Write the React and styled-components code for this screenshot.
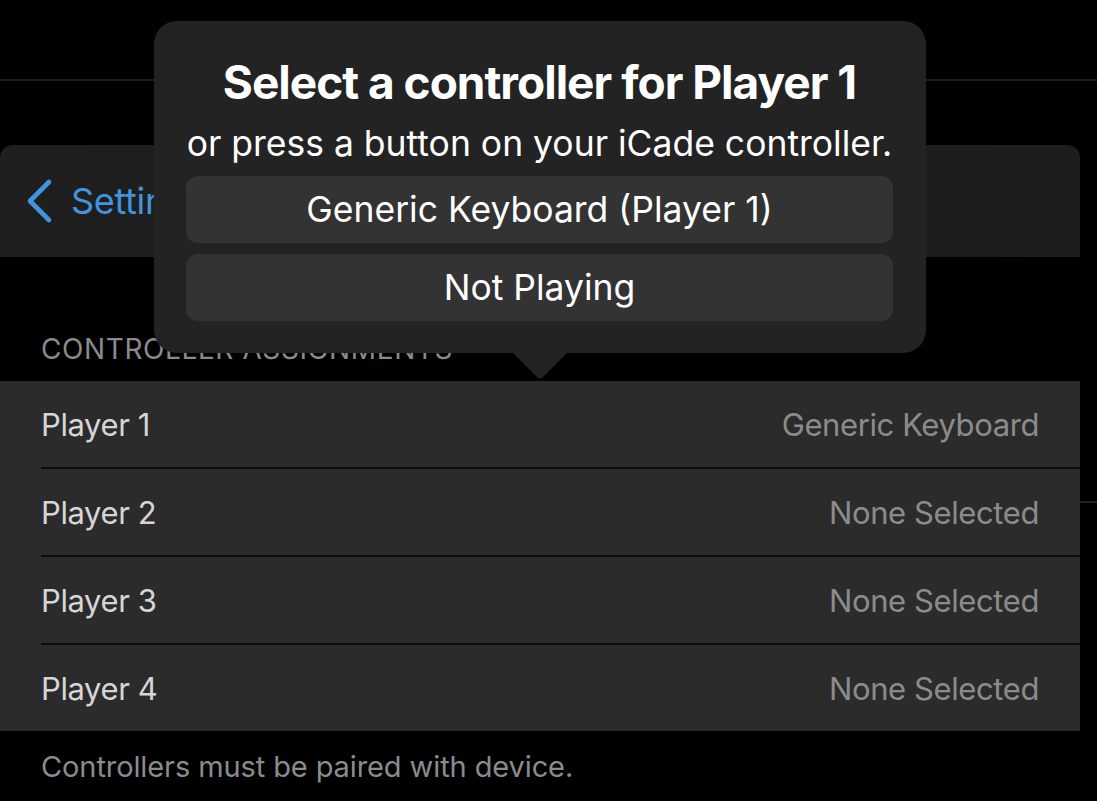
import React from 'react';
import styled, { createGlobalStyle } from 'styled-components';

const GlobalStyle = createGlobalStyle`
  html, body {
    margin: 0;
    padding: 0;
    background: #000;
  }
  body {
    font-family: Inter, "Noto Sans", "Liberation Sans", sans-serif;
    -webkit-font-smoothing: antialiased;
  }
`;

const Screen = styled.div`
  position: relative;
  width: 1097px;
  height: 801px;
  overflow: hidden;
  background: #000;
`;

// the page that lies under the sheet
const UnderNav = styled.div`
  height: 79px;
  border-bottom: 2px solid #1b1b1b;
`;

const UnderList = styled.div`
  height: 420px;
  border-bottom: 2px solid #222;
`;

const Sheet = styled.section`
  position: absolute;
  top: 145px;
  left: 0;
  width: 1080px;
  bottom: 0;
  background: #000;
  border-radius: 13px 13px 0 0;
  overflow: hidden;
  display: flex;
  flex-direction: column;
`;

const SheetHeader = styled.header`
  height: 112px;
  flex-shrink: 0;
  display: flex;
  align-items: center;
  padding-left: 25px;
  background: linear-gradient(90deg, #1f1f1f 0%, #1c1c1c 60%, #1d1d1d 100%);
`;

const BackButton = styled.a`
  display: flex;
  align-items: center;
  gap: 18px;
  color: #3f95df;
  font-size: 36px;
  letter-spacing: -0.3px;
  text-decoration: none;
`;

const SectionHeader = styled.h2`
  margin: 0;
  height: 124px;
  box-sizing: border-box;
  display: flex;
  align-items: flex-end;
  padding: 0 0 14px 41px;
  font-size: 28px;
  font-weight: 400;
  line-height: 36px;
  color: #8a8a8c;
  letter-spacing: 0.6px;
`;

const List = styled.ul`
  margin: 0;
  padding: 0;
  list-style: none;
  background: #2b2b2b;
`;

const Row = styled.li`
  box-sizing: border-box;
  margin-left: 41px;
  padding-right: 41px;
  display: flex;
  align-items: center;
  justify-content: space-between;
  font-size: 31px;
  letter-spacing: -0.4px;
  border-bottom: ${p => (p.$last ? 'none' : '2px solid #0c0c0c')};
  height: ${p => (p.$last ? '86px' : '88px')};
`;

const RowLabel = styled.span`
  color: #d6d6d6;
`;

const RowValue = styled.span`
  color: #8b8b8d;
`;

const Footer = styled.p`
  margin: 0;
  padding: 18px 0 0 41px;
  font-size: 29px;
  line-height: 36px;
  letter-spacing: -0.1px;
  color: #8b8b8e;
`;

const Popover = styled.div`
  position: absolute;
  left: 154px;
  top: 21px;
  width: 772px;
  box-sizing: border-box;
  padding: 32px 33px 32px 32px;
  background: #232323;
  border-radius: 23px;
  display: flex;
  flex-direction: column;
  align-items: stretch;
  text-align: center;
  color: #fff;
`;

const Arrow = styled.svg`
  position: absolute;
  left: 50%;
  bottom: -27px;
  margin-left: -28px;
  display: block;
`;

const Title = styled.h1`
  margin: 0;
  font-size: 46px;
  font-weight: 700;
  line-height: 58px;
  letter-spacing: -1px;
`;

const Subtitle = styled.p`
  margin: 12px 0 0;
  font-size: 35.5px;
  line-height: 42px;
  letter-spacing: 0;
`;

const Options = styled.div`
  margin-top: 11px;
  display: flex;
  flex-direction: column;
  gap: 11px;
`;

const Option = styled.button`
  height: 67px;
  border: none;
  border-radius: 12px;
  background: #333333;
  color: #fff;
  font-family: inherit;
  font-size: 35.5px;
  letter-spacing: 0;
  padding: 0;
  cursor: pointer;
`;

const players = [
  { name: 'Player 1', value: 'Generic Keyboard' },
  { name: 'Player 2', value: 'None Selected' },
  { name: 'Player 3', value: 'None Selected' },
  { name: 'Player 4', value: 'None Selected' },
];

export default function App() {
  return (
    <Screen>
      <GlobalStyle />
      <UnderNav />
      <UnderList />

      <Sheet>
        <SheetHeader>
          <BackButton href="#">
            <svg width="28" height="46" viewBox="0 0 28 46">
              <path d="M24 4 L5 23 L24 42" fill="none" stroke="#3f95df" strokeWidth="4.6" strokeLinecap="round" strokeLinejoin="round" />
            </svg>
            Settings
          </BackButton>
        </SheetHeader>
        <SectionHeader>CONTROLLER ASSIGNMENTS</SectionHeader>
        <List>
          {players.map((p, i) => (
            <Row key={p.name} $last={i === players.length - 1}>
              <RowLabel>{p.name}</RowLabel>
              <RowValue>{p.value}</RowValue>
            </Row>
          ))}
        </List>
        <Footer>Controllers must be paired with device.</Footer>
      </Sheet>

      <Popover>
        <Title>Select a controller for Player 1</Title>
        <Subtitle>or press a button on your iCade controller.</Subtitle>
        <Options>
          <Option>Generic Keyboard (Player 1)</Option>
          <Option>Not Playing</Option>
        </Options>
        <Arrow width="56" height="28" viewBox="0 0 56 28">
          <path d="M0 0 H56 L31 25 Q28 28 25 25 Z" fill="#232323" />
        </Arrow>
      </Popover>
    </Screen>
  );
}
